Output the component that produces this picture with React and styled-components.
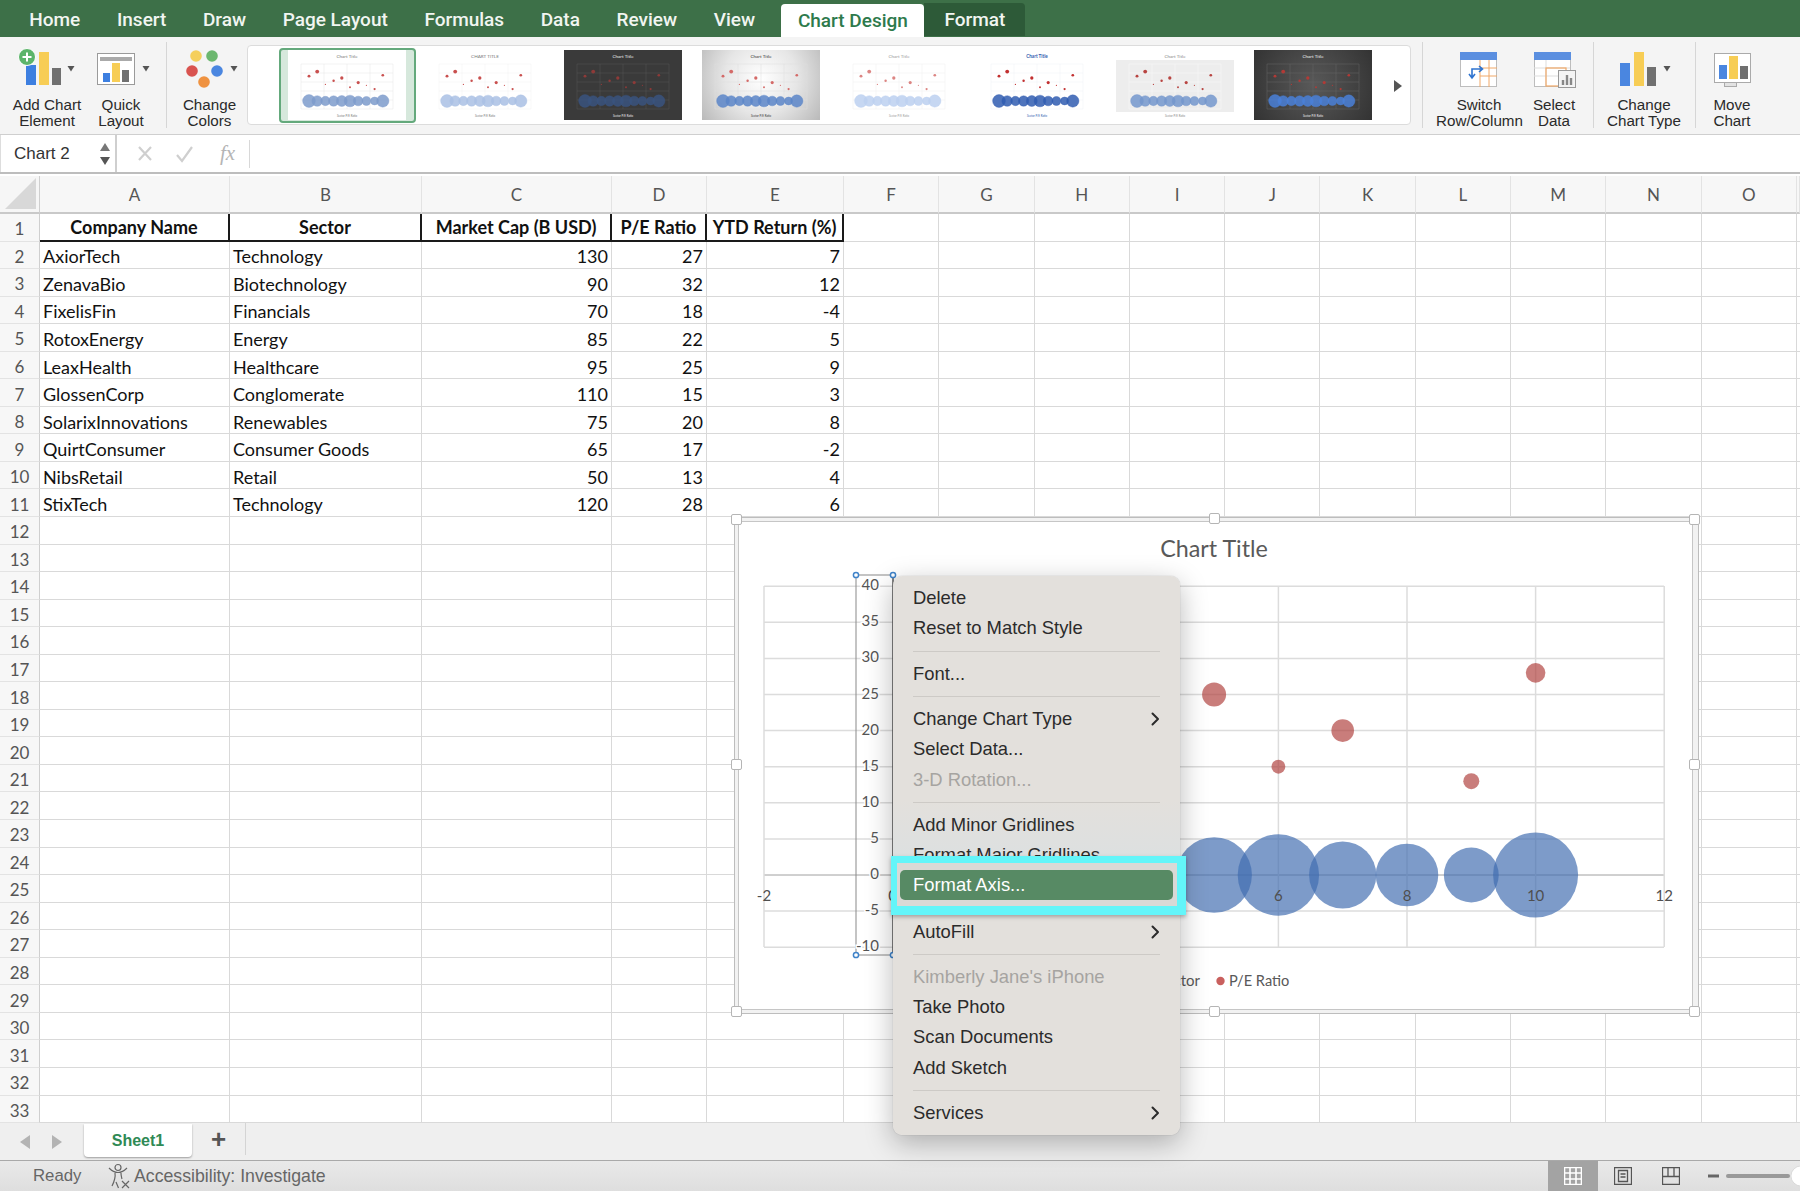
import React from 'react'
import styled, { createGlobalStyle } from 'styled-components'

const companies = [
  { name: 'AxiorTech', sector: 'Technology', cap: 130, pe: 27, ytd: 7 },
  { name: 'ZenavaBio', sector: 'Biotechnology', cap: 90, pe: 32, ytd: 12 },
  { name: 'FixelisFin', sector: 'Financials', cap: 70, pe: 18, ytd: -4 },
  { name: 'RotoxEnergy', sector: 'Energy', cap: 85, pe: 22, ytd: 5 },
  { name: 'LeaxHealth', sector: 'Healthcare', cap: 95, pe: 25, ytd: 9 },
  { name: 'GlossenCorp', sector: 'Conglomerate', cap: 110, pe: 15, ytd: 3 },
  { name: 'SolarixInnovations', sector: 'Renewables', cap: 75, pe: 20, ytd: 8 },
  { name: 'QuirtConsumer', sector: 'Consumer Goods', cap: 65, pe: 17, ytd: -2 },
  { name: 'NibsRetail', sector: 'Retail', cap: 50, pe: 13, ytd: 4 },
  { name: 'StixTech', sector: 'Technology', cap: 120, pe: 28, ytd: 6 },
]

const tabs = ['Home', 'Insert', 'Draw', 'Page Layout', 'Formulas', 'Data', 'Review', 'View']
const letters = ['A', 'B', 'C', 'D', 'E', 'F', 'G', 'H', 'I', 'J', 'K', 'L', 'M', 'N', 'O', '']
const headers = ['Company Name', 'Sector', 'Market Cap (B USD)', 'P/E Ratio', 'YTD Return (%)']
const rowNumbers = Array.from({ length: 33 }, (_, i) => i + 1)

const thumbs = [
  { bg: '#fff', grid: '#e6e6e6', dot: '#c9504f', bubble: '#7d9bcb', title: 'Chart Title', titleColor: '#777', selected: true },
  { bg: '#fff', grid: '#f0f0f0', dot: '#c9504f', bubble: '#a9c0e4', title: 'CHART TITLE', titleColor: '#777' },
  { bg: '#3a3a3a', grid: '#555', dot: '#8e3a38', bubble: '#39537f', title: 'Chart Title', titleColor: '#eee' },
  { bg: 'radial-gradient(circle at 50% 40%, #fff 0%, #e6e6e6 50%, #b9b9b9 100%)', grid: '#ddd', dot: '#d46a68', bubble: '#5a85c8', title: 'Chart Title', titleColor: '#333' },
  { bg: '#fff', grid: '#eee', dot: '#dc8583', bubble: '#bcd0f0', title: 'Chart Title', titleColor: '#999' },
  { bg: '#fff', grid: '#eef2f6', dot: '#c23030', bubble: '#2f5cb0', title: 'Chart Title', titleColor: '#2f5cb0' },
  { bg: 'linear-gradient(#fff 14%, #ededed 14%, #ededed 88%, #fff 88%)', grid: '#fafafa', dot: '#b84441', bubble: '#7396cc', title: 'Chart Title', titleColor: '#888' },
  { bg: 'radial-gradient(circle at 50% 50%, #595959 0%, #333 100%)', grid: '#666', dot: '#b23a36', bubble: '#4a80d8', title: 'Chart Title', titleColor: '#f2f2f2' },
]

const GlobalStyle = createGlobalStyle`
  html, body {
    margin: 0;
    background: #fff;
    overflow: hidden;
    font-family: "Liberation Sans", Arial, sans-serif;
  }
`

const Page = styled.div`
  position: relative;
  width: 1800px;
  height: 1191px;
  overflow: hidden;
  display: flex;
  flex-direction: column;
`

const TabBar = styled.div`
  height: 37px;
  flex: none;
  display: flex;
  align-items: flex-end;
  padding-left: 11px;
  background: #3d7048;
  font-family: Roboto, "Liberation Sans", sans-serif;
  font-size: 19px;
  font-weight: 500;
  color: #f1f5f1;
`

const Tab = styled.div`
  height: 37px;
  line-height: 40px;
  padding: 0 18.3px;
  white-space: nowrap;
`

const ActiveTab = styled.div`
  height: 33px;
  line-height: 33px;
  width: 143px;
  margin-left: 8px;
  text-align: center;
  background: #fff;
  color: #2e7a4c;
  border-radius: 4px 4px 0 0;
  white-space: nowrap;
`

const DarkTab = styled.div`
  height: 33px;
  line-height: 33px;
  width: 101px;
  margin-bottom: 1px;
  text-align: center;
  background: #2d5a38;
  border-radius: 0 4px 0 0;
`

const Ribbon = styled.div`
  height: 97px;
  flex: none;
  display: flex;
  align-items: flex-start;
  padding-left: 8px;
  background: #f4f4f4;
  border-bottom: 1px solid #cfcfcf;
`

const RibbonButton = styled.div`
  width: ${p => p.$w}px;
  flex: none;
  margin-left: ${p => p.$ml || 0}px;
  padding-top: 8px;
  text-align: center;
  font-size: 15.2px;
  line-height: 16px;
  color: #2a2a2a;
  svg { display: block; }
  span { display: block; white-space: nowrap; }
`

const RibbonSep = styled.div`
  width: 1px;
  height: 86px;
  flex: none;
  margin: 5px 0 0 ${p => p.$ml}px;
  background: #d6d6d6;
`

const Gallery = styled.div`
  width: 1164px;
  height: 80px;
  flex: none;
  box-sizing: border-box;
  margin-top: 8px;
  padding-left: 30px;
  display: flex;
  align-items: center;
  position: relative;
  background: #fff;
  border: 1px solid #dcdcdc;
  border-radius: 4px;
`

const ThumbSlot = styled.div`
  width: 138px;
  flex: none;
  display: flex;
  justify-content: center;
`

const ThumbFrame = styled.div`
  width: ${p => (p.$selected ? 137 : 118)}px;
  height: ${p => (p.$selected ? 75 : 70)}px;
  box-sizing: border-box;
  display: flex;
  justify-content: center;
  align-items: center;
  background: ${p => (p.$selected ? '#d6e8dc' : 'transparent')};
  border: ${p => (p.$selected ? '2px solid #64a97c' : 'none')};
  border-radius: 4px;
`

const ThumbChart = styled.div`
  width: 118px;
  height: 70px;
  flex: none;
  background: ${p => p.$bg};
  svg { display: block; }
`

const GalleryArrow = styled.div`
  position: absolute;
  right: 8px;
  top: 34px;
  width: 0;
  height: 0;
  border-left: 8px solid #555;
  border-top: 6px solid transparent;
  border-bottom: 6px solid transparent;
`

const FormulaBar = styled.div`
  height: 37px;
  flex: none;
  margin-bottom: 2px;
  display: flex;
  align-items: center;
  background: #fff;
  border-bottom: 2px solid #bdbdbd;
`

const NameBox = styled.div`
  width: 117px;
  height: 37px;
  flex: none;
  box-sizing: border-box;
  padding-left: 13px;
  display: flex;
  align-items: center;
  position: relative;
  border-right: 2px solid #cfcfcf;
  border-left: 1px solid #ddd;
  font-size: 17px;
  color: #333;
`

const Spinner = styled.svg`
  position: absolute;
  right: 4px;
  top: 7px;
`

const FormulaIcons = styled.div`
  width: 132px;
  height: 28px;
  flex: none;
  border-right: 1px solid #d8d8d8;
  svg { display: block; }
`

const Sheet = styled.div`
  position: relative;
  flex: none;
  display: grid;
  grid-template-columns: 40px 190px 192px 190px 95px 137px repeat(10, 95.3px) 3px;
  grid-auto-rows: 27.55px;
  grid-template-rows: 38px;
  font-family: Lato, "Open Sans", sans-serif;
  font-size: 18px;
  color: #111;
`

const Corner = styled.div`
  position: relative;
  background: #f6f6f6;
  border-right: 1px solid #cfcfcf;
  border-bottom: 2px solid #c9c9c9;
  &::after {
    content: "";
    position: absolute;
    right: 3px;
    bottom: 3px;
    border-left: 31px solid transparent;
    border-bottom: 31px solid #d8d8d8;
  }
`

const ColHead = styled.div`
  display: flex;
  align-items: center;
  justify-content: center;
  padding-top: 1px;
  background: #f7f7f7;
  border-right: 1px solid #e3e3e3;
  border-bottom: 2px solid #c9c9c9;
  color: #555;
  font-size: 17px;
`

const RowHead = styled.div`
  box-sizing: border-box;
  display: flex;
  align-items: center;
  justify-content: center;
  padding-top: 3px;
  background: #f7f7f7;
  border-right: 1px solid #cfcfcf;
  border-bottom: 1px solid #e3e3e3;
  color: #555;
  font-size: 17px;
`

const Cell = styled.div`
  box-sizing: border-box;
  display: flex;
  align-items: center;
  overflow: hidden;
  white-space: nowrap;
  padding: 3px 3px 0 3px;
  border-right: 1px solid #d9d9d9;
  border-bottom: 1px solid #d9d9d9;
  justify-content: ${p => (p.$right ? 'flex-end' : 'flex-start')};
`

const HeadCell = styled(Cell)`
  justify-content: center;
  padding-top: 1px;
  font-weight: 700;
  border-right: 2px solid #1a1a1a;
  border-bottom: 2px solid #1a1a1a;
`

const ChartFrame = styled.div`
  position: absolute;
  left: 734px;
  top: 341px;
  width: 965px;
  height: 497px;
  box-sizing: border-box;
  padding: 3.5px 5px 3.5px 3.5px;
  background: #f2f2f2;
  border: 1.5px solid #bdbdbd;
  svg {
    display: block;
    background: #fff;
    outline: 1.5px solid #c6c6c6;
  }
`

const Handle = styled.div`
  position: absolute;
  left: ${p => p.$x}px;
  top: ${p => p.$y}px;
  width: 11px;
  height: 11px;
  box-sizing: border-box;
  background: #fff;
  border: 1px solid #b5b5b5;
  border-radius: 2px;
`

const Menu = styled.div`
  position: absolute;
  left: 893px;
  top: 400px;
  width: 287px;
  box-sizing: border-box;
  padding: 7px 0;
  display: flex;
  flex-direction: column;
  background: linear-gradient(#e3e0dc 0%, #e3e0dc 40%, #dde0e0 50%, #e3e0dc 58%);
  border-radius: 9px;
  box-shadow: 0 0 1px rgba(0, 0, 0, 0.35), 0 8px 28px rgba(0, 0, 0, 0.28);
  font-family: "Liberation Sans", Arial, sans-serif;
  font-size: 18.4px;
  color: #2b2b2b;
`

const MenuItem = styled.div`
  height: 30.3px;
  flex: none;
  padding: 0 20px;
  display: flex;
  align-items: center;
  justify-content: space-between;
  color: ${p => (p.$disabled ? '#a6a4a1' : 'inherit')};
  svg { display: block; }
`

const MenuSep = styled.div`
  height: 1px;
  flex: none;
  margin: 7px 20px;
  background: #cdcac6;
`

const HighlightFrame = styled.div`
  position: relative;
  height: 59px;
  flex: none;
  box-sizing: border-box;
  margin: -14px -6px 1px -2px;
  padding: 7px 4px 6px 3px;
  border-style: solid;
  border-color: #63f5f9;
  border-width: 7px 9px 9px 6px;
  background: #d9d9d6;
  box-shadow: 0 2px 4px rgba(0, 0, 0, 0.28);
`

const ActiveItem = styled.div`
  height: 30px;
  padding-left: 13px;
  display: flex;
  align-items: center;
  background: #578a64;
  border-radius: 5px;
  color: #fff;
`

const SheetBar = styled.div`
  height: 37px;
  flex: none;
  display: flex;
  align-items: flex-start;
  background: #efefef;
  border-bottom: 1px solid #a9a9a9;
  svg { display: block; }
`

const SheetNav = styled.div`
  width: 84px;
  height: 36px;
  flex: none;
`

const SheetTab = styled.div`
  width: 108px;
  height: 33px;
  flex: none;
  margin-top: 1px;
  display: flex;
  align-items: center;
  justify-content: center;
  background: #fff;
  border-radius: 0 0 4px 4px;
  box-shadow: 0 1px 2px rgba(0, 0, 0, 0.35);
  color: #2f8a55;
  font-size: 16px;
  font-weight: 700;
`

const AddSheet = styled.div`
  width: 53px;
  height: 32px;
  flex: none;
  display: flex;
  align-items: center;
  justify-content: center;
  border-right: 1px solid #d4d4d4;
  font-size: 26px;
  font-weight: 700;
  color: #555;
`

const StatusBar = styled.div`
  height: 30px;
  flex: none;
  display: flex;
  align-items: center;
  padding-left: 33px;
  background: linear-gradient(#e9e9e9, #dedede);
  font-size: 16.8px;
  color: #666;
  svg { display: block; flex: none; }
`

const StatusReady = styled.div`
  width: 74px;
  flex: none;
`

const StatusAccess = styled.div`
  margin-left: 3px;
  white-space: nowrap;
  font-size: 17.7px;
`

const StatusRight = styled.div`
  margin-left: auto;
  display: flex;
  align-items: center;
  height: 30px;
`

const ViewButton = styled.div`
  width: ${p => p.$w}px;
  height: 30px;
  display: flex;
  align-items: center;
  justify-content: center;
  background: ${p => (p.$active ? '#a3a3a3' : 'transparent')};
`

const Triangle = ({ x }) => <polygon points={`${x - 3.5},66 ${x + 3.5},66 ${x},71.5`} fill="#555" />

// icons use page coordinates, the viewBox is the rect of the button
const ButtonIcon = ({ x, w, children }) => (
  <svg width={w} height={52} viewBox={`${x} 45 ${w} 52`}>{children}</svg>
)

const SheetGrid = ({ x }) => (
  <>
    <rect x={x + 0.5} y={52.5} width={36} height={34} fill="#fff" stroke="#bdbdbd" />
    <rect x={x} y={52} width={37} height={8} fill="#5b8fe0" />
  </>
)

const MiniThumb = ({ t }) => (
  <ThumbChart $bg={t.bg}>
    <svg width={118} height={70} viewBox="0 0 118 70">
      <text x={59} y={7.5} textAnchor="middle" fontSize={4.6} fontFamily="Lato, sans-serif" fontWeight={t.titleColor === '#2f5cb0' ? 700 : 400} fill={t.titleColor}>{t.title}</text>
      {[14, 23, 32, 41, 50, 59].map(y => <line key={y} x1={13} x2={105} y1={y} y2={y} stroke={t.grid} strokeWidth={0.5} />)}
      {[13, 36, 59, 82, 105].map(x => <line key={x} x1={x} x2={x} y1={14} y2={59} stroke={t.grid} strokeWidth={0.5} />)}
      {companies.map((c, i) => (
        <circle key={i} cx={21 + i * 8.2} cy={51} r={Math.sqrt(c.cap) * 0.56} fill={t.bubble} fillOpacity={0.85} stroke={t.bubble} strokeWidth={0.4} />
      ))}
      {companies.map((c, i) => (
        <circle key={i} cx={21 + i * 8.2} cy={51 - c.pe * 0.92} r={c.ytd > 0 ? Math.sqrt(c.ytd) * 0.55 : 0.6} fill={t.dot} />
      ))}
      <text x={59} y={66.5} textAnchor="middle" fontSize={2.8} fontFamily="Lato, sans-serif" fill={t.titleColor}>Sector  P/E Ratio</text>
    </svg>
  </ThumbChart>
)

const yLabels = [40, 35, 30, 25, 20, 15, 10, 5, 0, -5, -10]
const yOf = v => 876 - v * 7.22
const xOf = v => 892.6 + v * 64.3
const gridStroke = '#dcdcdc'

const BubbleChart = () => (
  <svg width={953} height={487} viewBox="739 523 953 487" fontFamily="Lato, sans-serif">
    <text x={1214} y={558} textAnchor="middle" fontSize={23.3} fill="#595959">Chart Title</text>
    {yLabels.map(v => <line key={v} x1={764} x2={1664} y1={yOf(v)} y2={yOf(v)} stroke={v === 0 ? '#a0a0a0' : gridStroke} strokeWidth={v === 0 ? 1 : 1.5} />)}
    {[-2, 2, 4, 6, 8, 10, 12].map(v => <line key={v} x1={xOf(v)} x2={xOf(v)} y1={587} y2={948} stroke={gridStroke} strokeWidth={1.5} />)}
    {companies.map((c, i) => (
      <circle key={c.name} cx={xOf(i + 1)} cy={876} r={3.88 * Math.sqrt(c.cap)} fill="#3f6cb0" fillOpacity={0.68} />
    ))}
    {companies.map((c, i) => c.ytd > 0 && (
      <circle key={c.name} cx={xOf(i + 1)} cy={yOf(c.pe)} r={4 * Math.sqrt(c.ytd)} fill="#b0403d" fillOpacity={0.68} />
    ))}
    {[-2, 0, 2, 4, 6, 8, 10, 12].map(v => <text key={v} x={xOf(v)} y={902} textAnchor="middle" fontSize={15} fill="#4f4f4f">{v}</text>)}
    <rect x={856} y={576} width={37} height={380} fill="none" stroke="#8a8a8a" strokeWidth={1} />
    <line x1={893} x2={893} y1={576} y2={956} stroke="#555" strokeWidth={1.2} />
    {yLabels.map(v => (
      <text key={v} x={879} y={yOf(v) + 4} textAnchor="end" fontSize={15} fill="#555" stroke="#fff" strokeWidth={3} paintOrder="stroke">{v}</text>
    ))}
    {[[856, 576], [893, 576], [856, 956], [893, 956]].map(([x, y]) => (
      <circle key={`${x}${y}`} cx={x} cy={y} r={2.6} fill="#fff" stroke="#3f83c9" strokeWidth={1.5} />
    ))}
    <text x={1200} y={987} textAnchor="end" fontSize={15} fill="#595959">Sector</text>
    <circle cx={1220.5} cy={982} r={4.2} fill="#c9605e" />
    <text x={1229} y={987} fontSize={14.6} fill="#595959">P/E Ratio</text>
  </svg>
)

const Chevron = () => (
  <svg width={9} height={14} viewBox="0 0 9 14"><path d="M1.5 1.5 7 7l-5.5 5.5" fill="none" stroke="#2b2b2b" strokeWidth={2} strokeLinecap="round" strokeLinejoin="round" /></svg>
)

export default function App() {
  return (
    <Page>
      <GlobalStyle />
      <TabBar>
        {tabs.map(t => <Tab key={t}>{t}</Tab>)}
        <ActiveTab>Chart Design</ActiveTab>
        <DarkTab>Format</DarkTab>
      </TabBar>

      <Ribbon>
        <RibbonButton $w={78}>
          <ButtonIcon x={8} w={78}>
            <rect x={26} y={65} width={10} height={20} fill="#3d7fe0" />
            <rect x={39} y={52} width={10} height={33} fill="#f7cd55" />
            <rect x={52} y={68} width={9} height={17} fill="#707070" />
            <circle cx={27} cy={57} r={8.5} fill="#5cb46a" stroke="#fff" strokeWidth={1} />
            <path d="M27 52.5v9M22.5 57h9" stroke="#fff" strokeWidth={2} />
            <Triangle x={71} />
          </ButtonIcon>
          <span>Add Chart</span>
          <span>Element</span>
        </RibbonButton>
        <RibbonButton $w={70}>
          <ButtonIcon x={86} w={70}>
            <rect x={97.5} y={53.5} width={37} height={31} fill="#fff" stroke="#9a9a9a" />
            <rect x={100} y={57} width={32} height={4} fill="#aaa" />
            <rect x={103} y={73} width={7} height={9} fill="#3d7fe0" />
            <rect x={112} y={63} width={8} height={19} fill="#f7cd55" />
            <rect x={122} y={70} width={7} height={12} fill="#707070" />
            <Triangle x={146} />
          </ButtonIcon>
          <span>Quick</span>
          <span>Layout</span>
        </RibbonButton>
        <RibbonSep $ml={10} />
        <RibbonButton $w={75} $ml={5}>
          <ButtonIcon x={172} w={75}>
            <circle cx={196} cy={56} r={5.8} fill="#f5cf5c" />
            <circle cx={212} cy={56} r={5.8} fill="#6cb76f" />
            <circle cx={192} cy={71} r={5.8} fill="#d9534f" />
            <circle cx={217} cy={71} r={5.8} fill="#4a86e0" />
            <circle cx={204} cy={82} r={5.8} fill="#ef9240" />
            <Triangle x={234} />
          </ButtonIcon>
          <span>Change</span>
          <span>Colors</span>
        </RibbonButton>

        <Gallery>
          {thumbs.map((t, i) => (
            <ThumbSlot key={i}>
              <ThumbFrame $selected={t.selected}><MiniThumb t={t} /></ThumbFrame>
            </ThumbSlot>
          ))}
          <GalleryArrow />
        </Gallery>

        <RibbonSep $ml={11} />
        <RibbonButton $w={86} $ml={13}>
          <ButtonIcon x={1436} w={86}>
            <SheetGrid x={1460} />
            <path d="M1480 60v27M1489 60v27M1480 68h17M1480 76h17" stroke="#f0a868" strokeWidth={1} fill="none" />
            <path d="M1472 78v-9h10m-3-3 3.5 3-3.5 3M1469 74l3 4 3-4" stroke="#2f74d0" strokeWidth={1.6} fill="none" />
          </ButtonIcon>
          <span>Switch</span>
          <span>Row/Column</span>
        </RibbonButton>
        <RibbonButton $w={64}>
          <ButtonIcon x={1522} w={64}>
            <SheetGrid x={1534} />
            <path d="M1534 68h36M1534 76h24M1546 60v26" stroke="#ddd" strokeWidth={1} />
            <rect x={1546} y={68} width={20} height={18} fill="none" stroke="#f0a868" strokeWidth={1.2} />
            <rect x={1558.5} y={70.5} width={17} height={17} fill="#f4f4f4" stroke="#999" />
            <path d="M1563 85v-5M1567 85v-10M1571 85v-7" stroke="#888" strokeWidth={2.4} />
          </ButtonIcon>
          <span>Select</span>
          <span>Data</span>
        </RibbonButton>
        <RibbonSep $ml={7} />
        <RibbonButton $w={100}>
          <ButtonIcon x={1594} w={100}>
            <rect x={1620} y={63} width={10} height={23} fill="#4a86e0" />
            <rect x={1634} y={52} width={10} height={34} fill="#f7cd55" />
            <rect x={1647} y={67} width={9} height={19} fill="#707070" />
            <Triangle x={1667} />
          </ButtonIcon>
          <span>Change</span>
          <span>Chart Type</span>
        </RibbonButton>
        <RibbonSep $ml={1} />
        <RibbonButton $w={72}>
          <ButtonIcon x={1697} w={72}>
            <rect x={1725.5} y={80.5} width={12} height={6} fill="#e2e2e2" stroke="#aaa" />
            <rect x={1715.5} y={53.5} width={36} height={29} fill="#fff" stroke="#aaa" />
            <rect x={1720} y={65} width={8} height={14} fill="#4a86e0" />
            <rect x={1730} y={56} width={9} height={23} fill="#f7cd55" />
            <rect x={1741} y={66} width={8} height={13} fill="#707070" />
          </ButtonIcon>
          <span>Move</span>
          <span>Chart</span>
        </RibbonButton>
      </Ribbon>

      <FormulaBar>
        <NameBox>
          Chart 2
          <Spinner width={12} height={24} viewBox="0 0 12 24">
            <polygon points="6,1 11,9 1,9" fill="#777" />
            <polygon points="6,23 11,15 1,15" fill="#555" />
          </Spinner>
        </NameBox>
        <FormulaIcons>
          <svg width={132} height={28} viewBox="117 140 132 28">
            <path d="M139 147l12 13M151 147l-12 13" stroke="#cfcfcf" strokeWidth={2.2} fill="none" />
            <path d="M177 155l5 6 10-14" stroke="#cfcfcf" strokeWidth={2.2} fill="none" />
            <text x={220} y={160} fontFamily="Liberation Serif, serif" fontStyle="italic" fontSize={21} fill="#b5b5b5">fx</text>
          </svg>
        </FormulaIcons>
      </FormulaBar>

      <Sheet>
        <Corner />
        {letters.map((l, i) => <ColHead key={i}>{l}</ColHead>)}
        {rowNumbers.map(n => {
          const c = companies[n - 2]
          return (
            <React.Fragment key={n}>
              <RowHead>{n}</RowHead>
              {letters.map((l, i) => {
                if (n === 1 && i < 5) return <HeadCell key={i}>{headers[i]}</HeadCell>
                if (c && i === 0) return <Cell key={i}>{c.name}</Cell>
                if (c && i === 1) return <Cell key={i}>{c.sector}</Cell>
                if (c && i === 2) return <Cell key={i} $right>{c.cap}</Cell>
                if (c && i === 3) return <Cell key={i} $right>{c.pe}</Cell>
                if (c && i === 4) return <Cell key={i} $right>{c.ytd}</Cell>
                return <Cell key={i} />
              })}
            </React.Fragment>
          )
        })}

        <ChartFrame><BubbleChart /></ChartFrame>
        <Handle $x={731} $y={338} />
        <Handle $x={1209} $y={337} />
        <Handle $x={1689} $y={338} />
        <Handle $x={731} $y={583} />
        <Handle $x={1689} $y={583} />
        <Handle $x={731} $y={830} />
        <Handle $x={1209} $y={830} />
        <Handle $x={1689} $y={830} />

        <Menu>
          <MenuItem>Delete</MenuItem>
          <MenuItem>Reset to Match Style</MenuItem>
          <MenuSep />
          <MenuItem>Font...</MenuItem>
          <MenuSep />
          <MenuItem>Change Chart Type<Chevron /></MenuItem>
          <MenuItem>Select Data...</MenuItem>
          <MenuItem $disabled>3-D Rotation...</MenuItem>
          <MenuSep />
          <MenuItem>Add Minor Gridlines</MenuItem>
          <MenuItem>Format Major Gridlines</MenuItem>
          <HighlightFrame><ActiveItem>Format Axis...</ActiveItem></HighlightFrame>
          <MenuItem>AutoFill<Chevron /></MenuItem>
          <MenuSep />
          <MenuItem $disabled>Kimberly Jane's iPhone</MenuItem>
          <MenuItem>Take Photo</MenuItem>
          <MenuItem>Scan Documents</MenuItem>
          <MenuItem>Add Sketch</MenuItem>
          <MenuSep />
          <MenuItem>Services<Chevron /></MenuItem>
        </Menu>
      </Sheet>

      <SheetBar>
        <SheetNav>
          <svg width={84} height={36} viewBox="0 0 84 36">
            <polygon points="20,19 30,12 30,26" fill="#b3b3b3" />
            <polygon points="52,12 62,19 52,26" fill="#b3b3b3" />
          </svg>
        </SheetNav>
        <SheetTab>Sheet1</SheetTab>
        <AddSheet>+</AddSheet>
      </SheetBar>

      <StatusBar>
        <StatusReady>Ready</StatusReady>
        <svg width={24} height={26} viewBox="0 0 24 26">
          <circle cx={11} cy={4.5} r={3} fill="none" stroke="#666" strokeWidth={1.2} />
          <path d="M2 5c3 3 6 4.5 9 4.5S17 8 20 5M8 10c.5 3 0 7-3 13M14 10c0 3 .5 4 1 6" fill="none" stroke="#666" strokeWidth={1.2} />
          <path d="M15 18l7 7M22 18l-7 7M9 19l2.5 6" fill="none" stroke="#666" strokeWidth={1.2} />
        </svg>
        <StatusAccess>Accessibility: Investigate</StatusAccess>
        <StatusRight>
          <ViewButton $w={50} $active>
            <svg width={18} height={18} viewBox="0 0 18 18"><path d="M0.5 0.5h17v17H.5zM0 6h18M0 12h18M6 0v18M12 0v18" fill="none" stroke="#fff" strokeWidth={1.6} /></svg>
          </ViewButton>
          <ViewButton $w={50}>
            <svg width={18} height={18} viewBox="0 0 18 18"><path d="M.5.5h17v17H.5zM4.5 3.5h9v11h-9zM6.5 7h5M6.5 10h5" fill="none" stroke="#555" strokeWidth={1.3} /></svg>
          </ViewButton>
          <ViewButton $w={46}>
            <svg width={18} height={18} viewBox="0 0 18 18"><path d="M.5.5h17v17H.5zM6 .5v9h6v-9M12 9.5h5.5M6 9.5H.5" fill="none" stroke="#555" strokeWidth={1.3} /></svg>
          </ViewButton>
          <svg width={106} height={30} viewBox="1694 1161 106 30">
            <path d="M1708 1176h11" stroke="#666" strokeWidth={3} />
            <path d="M1728 1176h60" stroke="#999" strokeWidth={4} strokeLinecap="round" />
            <circle cx={1801} cy={1176} r={10} fill="#fff" stroke="#ccc" strokeWidth={0.6} />
          </svg>
        </StatusRight>
      </StatusBar>
    </Page>
  )
}
